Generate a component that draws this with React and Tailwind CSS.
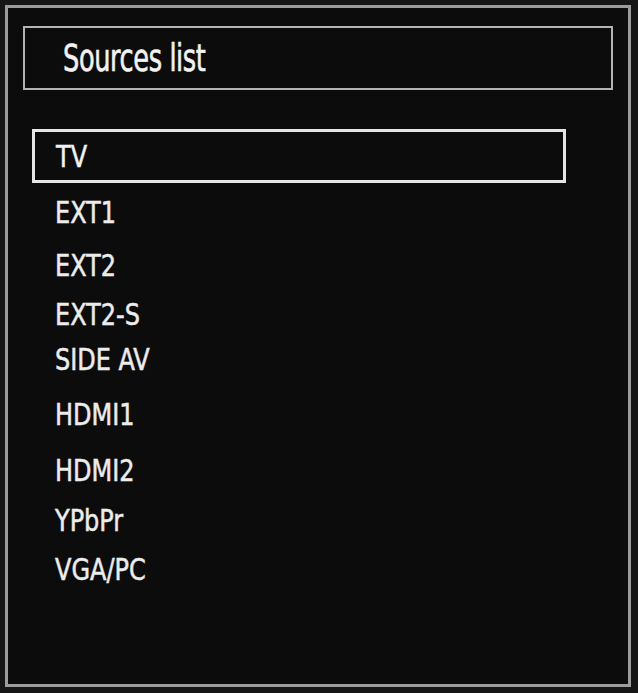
const sources = [
  { label: 'EXT1', mt: 'mt-[14px]' },
  { label: 'EXT2', mt: 'mt-[23px]' },
  { label: 'EXT2-S', mt: 'mt-[19px]' },
  { label: 'SIDE AV', mt: 'mt-[15px]' },
  { label: 'HDMI1', mt: 'mt-[25px]' },
  { label: 'HDMI2', mt: 'mt-[26px]' },
  { label: 'YPbPr', mt: 'mt-[20px]' },
  { label: 'VGA/PC', mt: 'mt-[19px]' },
];

const font = { fontFamily: '"DejaVu Sans Condensed", "DejaVu Sans", sans-serif' };

export default function App() {
  return (
    <div className="w-[638px] h-[693px] bg-[#161616] pt-[5px] pl-[5px]" style={font}>
      <div className="w-[626px] h-[682px] border-[3px] border-[#9c9c9c] bg-[#0c0c0c]">
        {/* Title bar */}
        <div className="ml-[15px] mt-[18px] w-[590px] h-[64px] border-2 border-[#b4b4b4] flex items-center pl-[38px]">
          <span className="inline-block origin-left scale-x-[0.77] text-[37px] leading-none text-[#f2f2f2] tracking-[-0.5px] [-webkit-text-stroke:0.6px_#f2f2f2]">
            Sources list
          </span>
        </div>

        {/* Selected source */}
        <div className="ml-[24px] mt-[39px] w-[534px] h-[54px] border-[3px] border-[#e6e6e6] flex items-center pl-[21px]">
          <span className="inline-block origin-left scale-x-[0.86] text-[31px] leading-[30px] text-[#f2f2f2] [-webkit-text-stroke:0.5px_#f2f2f2]">
            TV
          </span>
        </div>

        <ul className="pl-[47px]">
          {sources.map((s) => (
            <li key={s.label} className={`${s.mt} text-[31px] leading-[30px] text-[#ececec]`}>
              <span className="inline-block origin-left scale-x-[0.86] [-webkit-text-stroke:0.5px_#ececec]">{s.label}</span>
            </li>
          ))}
        </ul>
      </div>
    </div>
  );
}
